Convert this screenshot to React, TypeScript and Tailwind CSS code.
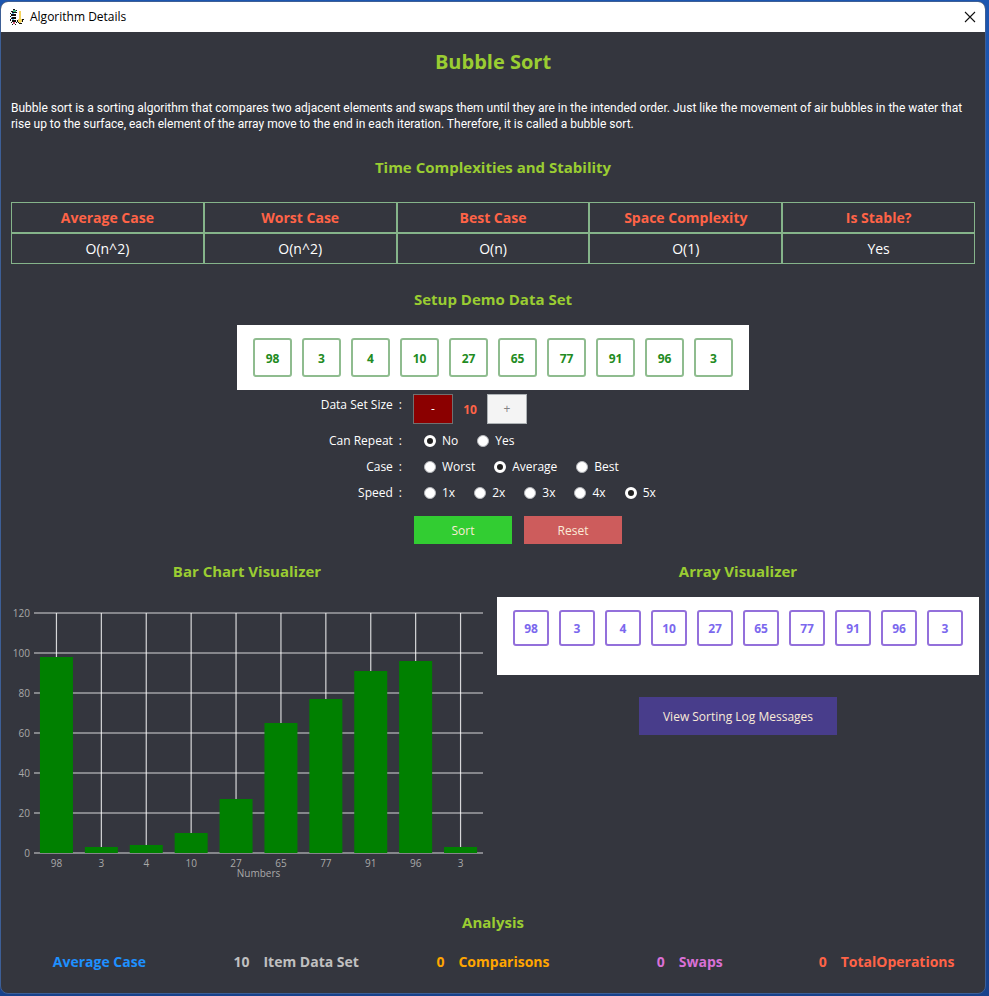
import { useState } from "react";
import type { ReactNode } from "react";

const dataSet = [98, 3, 4, 10, 27, 65, 77, 91, 96, 3];

const complexities = [
  { name: "Average Case", value: "O(n^2)" },
  { name: "Worst Case", value: "O(n^2)" },
  { name: "Best Case", value: "O(n)" },
  { name: "Space Complexity", value: "O(1)" },
  { name: "Is Stable?", value: "Yes" },
];

function AppIcon() {
  return (
    <svg width="14" height="16" viewBox="0 0 14 16" shapeRendering="crispEdges" aria-hidden="true">
      <path
        fill="#111"
        d="M3 0h2v1H3zM1 2h2v1H1zM6 1h1v1H6zM0 4h1v1H0zM2 3h4v1H2zM1 5h5v2H1zM0 7h1v1H0zM2 8h4v1H2zM1 9h5v1H1zM0 10h1v2H0zM2 11h4v2H2zM1 13h1v1H1zM6 13h1v1H6zM2 15h1v1H2zM5 15h1v1H5zM6 3h1v1H6zM7 11h1v2H7zM8 13h1v1H8zM12 10h2v1h-2zM12 11h1v2h-1zM9 14h3v1H9z"
      />
      <path fill="#3fae7c" d="M3 1h3v2H3z" />
      <path fill="#c8506e" d="M3 13h2v2H3z" />
      <path fill="#4db2ec" d="M2 4h2v1H2zM1 8h1v1H1zM2 10h2v1H2z" />
      <path fill="#f4d35e" d="M9 2h2v12H9zM8 10h1v3H8zM11 10h1v3h-1z" />
    </svg>
  );
}

function SectionTitle({ children }: { children: ReactNode }) {
  return <h2 className="text-center text-[15px] leading-5 font-bold text-[#9acd32]">{children}</h2>;
}

function BarChart() {
  const left = 33;
  const top = 16;
  const plotWidth = 449;
  const plotHeight = 240;
  const step = plotWidth / dataSet.length;
  const ticks = [0, 20, 40, 60, 80, 100, 120];
  const y = (value: number) => top + plotHeight - (value / 120) * plotHeight;
  return (
    <svg viewBox="0 0 492 290" className="w-full" role="img" aria-label="Bar chart of the data set">
      <g stroke="#fff" strokeWidth="1.2">
        {ticks.map((t) => (
          <line key={t} x1={left} x2={left + plotWidth} y1={y(t)} y2={y(t)} strokeOpacity="0.8" />
        ))}
        {dataSet.map((_, i) => (
          <line key={i} x1={left + step * (i + 0.5)} x2={left + step * (i + 0.5)} y1={top} y2={top + plotHeight} strokeOpacity="0.8" />
        ))}
      </g>
      {dataSet.map((v, i) => (
        <rect key={i} x={left + step * (i + 0.5) - 16.5} y={y(v)} width="33" height={y(0) - y(v)} fill="#008000" />
      ))}
      <g fill="#a9a9a9" fontSize="10">
        {ticks.map((t) => (
          <text key={t} x={left - 4} y={y(t) + 4} textAnchor="end">
            {t}
          </text>
        ))}
        {dataSet.map((v, i) => (
          <text key={i} x={left + step * (i + 0.5)} y="270" textAnchor="middle">
            {v}
          </text>
        ))}
        <text x={left + plotWidth / 2} y="280" textAnchor="middle">
          Numbers
        </text>
      </g>
    </svg>
  );
}

function OptionRow({ name, label, options, initial }: { name: string; label: string; options: string[]; initial: string }) {
  const [value, setValue] = useState(initial);
  return (
    <div role="radiogroup" aria-label={label} className="flex h-[26px] items-center">
      <RowLabel>{label}</RowLabel>
      <div className="flex gap-[19px] pl-[11px]">
        {options.map((o) => (
          <label key={o} className="flex items-center gap-1.5">
            <input
              type="radio"
              name={name}
              checked={value === o}
              onChange={() => setValue(o)}
              className="mb-px size-3 appearance-none rounded-full border border-[#b4b6ba] bg-white checked:border-[3px] checked:border-white checked:bg-[#212121]"
            />
            {o}
          </label>
        ))}
      </div>
    </div>
  );
}

function RowLabel({ children }: { children: ReactNode }) {
  return (
    <span className="flex w-[412px] justify-end gap-1.5 pr-[11px]">
      <span>{children}</span>
      <span>:</span>
    </span>
  );
}

function Stat({ count, label, color }: { count?: number; label: string; color: string }) {
  return (
    <div className={`flex justify-center gap-3.5 ${color}`}>
      {count !== undefined && <span>{count}</span>}
      <span>{label}</span>
    </div>
  );
}

export default function App() {
  const [size] = useState(10);
  return (
    <div className="min-h-screen bg-linear-to-b from-[#1c56b0] to-[#17428c] pt-px pr-[3px] pb-0.5 font-['Open_Sans','Noto_Sans',sans-serif] text-[12px] leading-4 text-white">
      <div className="flex min-h-[calc(100vh-3px)] flex-col overflow-hidden rounded-lg border border-[#3d5f96] bg-[#34363e]">
        <header className="flex h-[30px] items-center bg-white pr-[9px] pl-[9px] text-black">
          <AppIcon />
          <span className="flex-1 pl-1.5">Algorithm Details</span>
          <button type="button" aria-label="Close">
            <svg width="12" height="12" viewBox="0 0 12 12" stroke="#111" strokeWidth="1.1">
              <path d="M1 1l10 10M11 1L1 11" />
            </svg>
          </button>
        </header>

        <main className="flex-1">
          <h1 className="pt-4 text-center text-[20px] leading-7 font-bold text-[#9acd32]">Bubble Sort</h1>
          <p className="px-2.5 pt-6 pb-[25px] font-['Roboto','Open_Sans',sans-serif]">
            Bubble sort is a sorting algorithm that compares two adjacent elements and swaps them until they are in the
            intended order. Just like the movement of air bubbles in the water that rise up to the surface, each element
            of the array move to the end in each iteration. Therefore, it is called a bubble sort.
          </p>

          <SectionTitle>Time Complexities and Stability</SectionTitle>
          <div className="px-2.5 py-[25px]">
            <table className="w-full table-fixed border-separate border-spacing-0 text-center text-[14px] leading-5">
              <thead>
                <tr className="text-[#ff6347]">
                  {complexities.map((c) => (
                    <th key={c.name} className="h-[31px] border border-[#85b48a] font-bold">
                      {c.name}
                    </th>
                  ))}
                </tr>
              </thead>
              <tbody>
                <tr>
                  {complexities.map((c) => (
                    <td key={c.name} className="h-[31px] border border-[#85b48a]">
                      {c.value}
                    </td>
                  ))}
                </tr>
              </tbody>
            </table>
          </div>

          <SectionTitle>Setup Demo Data Set</SectionTitle>
          <div className="mx-auto mt-4 flex h-[65px] w-[512px] items-center justify-center gap-2.5 bg-white font-bold text-[#228b22]">
            {dataSet.map((v, i) => (
              <span key={i} className="flex size-[39px] items-center justify-center rounded-[3px] border-2 border-[#8fbc8f] pt-0.5">
                {v}
              </span>
            ))}
          </div>

          <div className="pt-1">
            <div className="flex h-[34px]">
              <div className="pt-[3px]">
                <RowLabel>Data Set Size</RowLabel>
              </div>
              <div className="flex h-[30px]">
                <button type="button" aria-label="Decrease" className="w-10 border border-[#707070] bg-[#8b0000]">
                  -
                </button>
                <output className="w-[34px] self-center pt-0.5 text-center font-bold text-[#ff6347]">{size}</output>
                <button type="button" aria-label="Increase" className="w-10 border border-[#adb2b5] bg-[#f4f4f4] text-[#838383]">
                  +
                </button>
              </div>
            </div>
            <OptionRow name="repeat" label="Can Repeat" options={["No", "Yes"]} initial="No" />
            <OptionRow name="case" label="Case" options={["Worst", "Average", "Best"]} initial="Average" />
            <OptionRow name="speed" label="Speed" options={["1x", "2x", "3x", "4x", "5x"]} initial="5x" />
            <div className="flex gap-3 pt-2.5 pl-[413px] text-[#faebd7]">
              <button type="button" className="h-7 w-[98px] bg-[#32cd32] pt-px">
                Sort
              </button>
              <button type="button" className="h-7 w-[98px] bg-[#cd5c5c] pt-px">
                Reset
              </button>
            </div>
          </div>

          <div className="grid grid-cols-2 pt-[17px]">
            <section>
              <SectionTitle>Bar Chart Visualizer</SectionTitle>
              <div className="pt-4">
                <BarChart />
              </div>
            </section>
            <section className="pr-1.5 pl-1">
              <SectionTitle>Array Visualizer</SectionTitle>
              <div className="mt-4 flex h-[78px] justify-center gap-2.5 bg-white pt-[13px] font-bold text-[#7b68ee]">
                {dataSet.map((v, i) => (
                  <span key={i} className="flex size-9 items-center justify-center rounded-[3px] border-2 border-[#9370db] pt-0.5">
                    {v}
                  </span>
                ))}
              </div>
              <div className="flex justify-center pt-[22px]">
                <button type="button" className="h-[38px] w-[198px] bg-[#483d8b] pt-0.5 text-[#faebd7]">
                  View Sorting Log Messages
                </button>
              </div>
            </section>
          </div>

          <div className="pt-[25px]">
            <SectionTitle>Analysis</SectionTitle>
            <div className="grid grid-cols-5 pt-5 text-[14px] leading-5 font-bold">
              <Stat label="Average Case" color="text-[#1e90ff]" />
              <Stat count={size} label="Item Data Set" color="text-[#c0c0c0]" />
              <Stat count={0} label="Comparisons" color="text-[#ffa500]" />
              <Stat count={0} label="Swaps" color="text-[#da70d6]" />
              <Stat count={0} label="TotalOperations" color="text-[#ff6347]" />
            </div>
          </div>
        </main>
      </div>
    </div>
  );
}
